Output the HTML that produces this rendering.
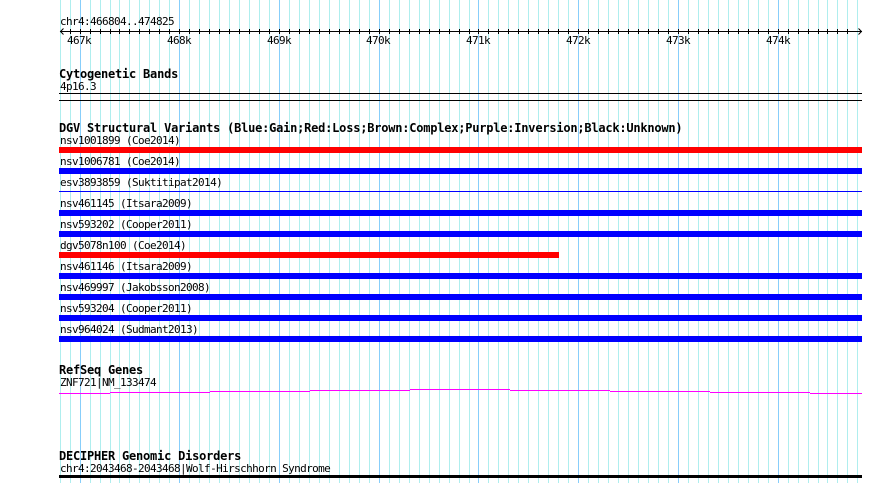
<!DOCTYPE html>
<html lang="en">
<head>
<meta charset="utf-8">
<title>Genome browser tracks</title>
<style>
html,body{margin:0;padding:0;background:#fff;width:890px;height:483px;overflow:hidden}
svg{display:block}
text{font-family:"DejaVu Sans Mono","Liberation Mono",monospace;font-size:11px;letter-spacing:-.62px;fill:#000;white-space:pre}
text.t{font-weight:bold;font-size:12px;letter-spacing:-.22px}
</style>
</head>
<body>
<svg width="890" height="483" viewBox="0 0 890 483" xmlns="http://www.w3.org/2000/svg">
<g transform="translate(.5,0)" fill="none" shape-rendering="crispEdges">
<path stroke="#afeeee" d="M60 0v483M70 0v483M90 0v483M100 0v483M110 0v483M119 0v483M129 0v483M139 0v483M149 0v483M159 0v483M169 0v483M189 0v483M199 0v483M209 0v483M219 0v483M229 0v483M239 0v483M249 0v483M259 0v483M269 0v483M289 0v483M299 0v483M309 0v483M319 0v483M329 0v483M339 0v483M349 0v483M359 0v483M369 0v483M389 0v483M399 0v483M409 0v483M419 0v483M429 0v483M439 0v483M449 0v483M459 0v483M469 0v483M488 0v483M498 0v483M508 0v483M518 0v483M528 0v483M538 0v483M548 0v483M558 0v483M568 0v483M588 0v483M598 0v483M608 0v483M618 0v483M628 0v483M638 0v483M648 0v483M658 0v483M668 0v483M688 0v483M698 0v483M708 0v483M718 0v483M728 0v483M738 0v483M748 0v483M758 0v483M768 0v483M788 0v483M798 0v483M808 0v483M818 0v483M827 0v483M837 0v483M847 0v483M857 0v483"/>
<path stroke="#87cefa" d="M80 0v483M179 0v483M279 0v483M379 0v483M478 0v483M578 0v483M678 0v483M778 0v483"/>
<path stroke="#000" d="M70 29v5M80 29v5M90 29v5M100 29v5M110 29v5M119 29v5M129 29v5M139 29v5M149 29v5M159 29v5M169 29v5M179 29v5M189 29v5M199 29v5M209 29v5M219 29v5M229 29v5M239 29v5M249 29v5M259 29v5M269 29v5M279 29v5M289 29v5M299 29v5M309 29v5M319 29v5M329 29v5M339 29v5M349 29v5M359 29v5M369 29v5M379 29v5M389 29v5M399 29v5M409 29v5M419 29v5M429 29v5M439 29v5M449 29v5M459 29v5M469 29v5M478 29v5M488 29v5M498 29v5M508 29v5M518 29v5M528 29v5M538 29v5M548 29v5M558 29v5M568 29v5M578 29v5M588 29v5M598 29v5M608 29v5M618 29v5M628 29v5M638 29v5M648 29v5M658 29v5M668 29v5M678 29v5M688 29v5M698 29v5M708 29v5M718 29v5M728 29v5M738 29v5M748 29v5M758 29v5M768 29v5M778 29v5M788 29v5M798 29v5M808 29v5M818 29v5M827 29v5M837 29v5M847 29v5"/>
</g>
<g fill="#000" shape-rendering="crispEdges">
<rect x="60" y="31" width="802" height="1"/>
<rect x="59" y="93" width="803" height="1"/>
<rect x="59" y="100" width="803" height="1"/>
<rect x="59" y="475" width="803" height="3"/>
</g>
<path d="M63.5 28.5L60.5 31.5L63.5 34.5M858.5 28.5L861.5 31.5L858.5 34.5" fill="none" stroke="#000" stroke-width="1"/>
<g shape-rendering="crispEdges">
<rect x="59" y="147" width="803" height="6" fill="#f00"/>
<rect x="59" y="168" width="803" height="6" fill="#00f"/>
<rect x="59" y="191" width="803" height="1" fill="#00f"/>
<rect x="59" y="210" width="803" height="6" fill="#00f"/>
<rect x="59" y="231" width="803" height="6" fill="#00f"/>
<rect x="59" y="252" width="500" height="6" fill="#f00"/>
<rect x="59" y="273" width="803" height="6" fill="#00f"/>
<rect x="59" y="294" width="803" height="6" fill="#00f"/>
<rect x="59" y="315" width="803" height="6" fill="#00f"/>
<rect x="59" y="336" width="803" height="6" fill="#00f"/>
<g fill="#f0f">
<rect x="59" y="393" width="51" height="1"/>
<rect x="110" y="392" width="100" height="1"/>
<rect x="210" y="391" width="100" height="1"/>
<rect x="310" y="390" width="100" height="1"/>
<rect x="410" y="389" width="100" height="1"/>
<rect x="510" y="390" width="100" height="1"/>
<rect x="610" y="391" width="100" height="1"/>
<rect x="710" y="392" width="100" height="1"/>
<rect x="810" y="393" width="52" height="1"/>
</g>
</g>
<text x="60" y="25">chr4:466804..474825</text>
<text x="67" y="44">467k</text>
<text x="167" y="44">468k</text>
<text x="267" y="44">469k</text>
<text x="366" y="44">470k</text>
<text x="466" y="44">471k</text>
<text x="566" y="44">472k</text>
<text x="666" y="44">473k</text>
<text x="766" y="44">474k</text>
<text class="t" x="59" y="78">Cytogenetic Bands</text>
<text x="60" y="90">4p16.3</text>
<text class="t" x="59" y="132">DGV Structural Variants (Blue:Gain;Red:Loss;Brown:Complex;Purple:Inversion;Black:Unknown)</text>
<text x="60" y="144">nsv1001899 (Coe2014)</text>
<text x="60" y="165">nsv1006781 (Coe2014)</text>
<text x="60" y="186">esv3893859 (Suktitipat2014)</text>
<text x="60" y="207">nsv461145 (Itsara2009)</text>
<text x="60" y="228">nsv593202 (Cooper2011)</text>
<text x="60" y="249">dgv5078n100 (Coe2014)</text>
<text x="60" y="270">nsv461146 (Itsara2009)</text>
<text x="60" y="291">nsv469997 (Jakobsson2008)</text>
<text x="60" y="312">nsv593204 (Cooper2011)</text>
<text x="60" y="333">nsv964024 (Sudmant2013)</text>
<text class="t" x="59" y="374">RefSeq Genes</text>
<text x="60" y="386">ZNF721|NM_133474</text>
<text class="t" x="59" y="460">DECIPHER Genomic Disorders</text>
<text x="60" y="472">chr4:2043468-2043468|Wolf-Hirschhorn Syndrome</text>
</svg>
</body>
</html>
